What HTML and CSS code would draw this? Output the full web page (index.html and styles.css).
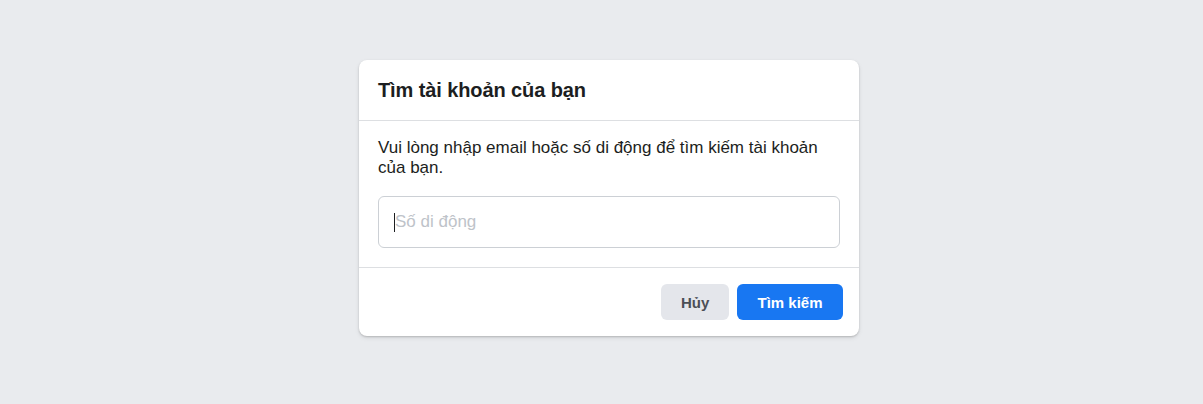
FILE: index.html
```html
<!DOCTYPE html>
<html lang="vi">
<head>
<meta charset="utf-8">
<title>Tìm tài khoản của bạn</title>
<link rel="stylesheet" href="styles.css">
</head>
<body>
<main class="page">
  <section class="card">
    <header class="card-header">
      <h2 class="card-title">Tìm tài khoản của bạn</h2>
    </header>
    <div class="card-body">
      <p class="card-text">Vui lòng nhập email hoặc số di động để tìm kiếm tài khoản của bạn.</p>
      <div class="field">
        <span class="caret"></span>
        <input class="input" type="text" placeholder="Số di động">
      </div>
    </div>
    <footer class="card-footer">
      <button class="btn btn-cancel" type="button">Hủy</button>
      <button class="btn btn-primary" type="button">Tìm kiếm</button>
    </footer>
  </section>
</main>
</body>
</html>
```
FILE: styles.css
```css
* { box-sizing: border-box; }
html, body {
  margin: 0;
  padding: 0;
  background: #e9ebee;
  font-family: "Liberation Sans", Arial, Helvetica, sans-serif;
}
.page {
  display: flex;
  justify-content: center;
  padding-top: 60px;
  padding-left: 15px;
  height: 404px;
}
.card {
  width: 500px;
  height: 276px;
  background: #fff;
  border-radius: 8px;
  box-shadow: 0 1px 2px rgba(0,0,0,0.18), 0 2px 5px rgba(0,0,0,0.08);
  display: flex;
  flex-direction: column;
}
.card-header {
  height: 61px;
  padding: 0 19px;
  display: flex;
  align-items: center;
  border-bottom: 1px solid #dddfe2;
}
.card-title {
  margin: 0;
  font-size: 20px;
  font-weight: bold;
  color: #1c1e21;
  line-height: 24px;
  letter-spacing: -0.1px;
}
.card-body {
  padding: 17px 19px 19px;
  border-bottom: 1px solid #dddfe2;
}
.card-text {
  margin: 0 0 18px;
  font-size: 17px;
  line-height: 20px;
  color: #1c1e21;
}
.field {
  position: relative;
}
.input {
  display: block;
  width: 100%;
  height: 52px;
  border: 1px solid #ccd0d5;
  border-radius: 6px;
  padding: 0 16px;
  font-family: inherit;
  font-size: 17px;
  color: #1d2129;
  outline: none;
  background: #fff;
}
.input::placeholder {
  color: #bec3c9;
}
.caret {
  position: absolute;
  left: 16px;
  top: 17px;
  width: 1px;
  height: 19px;
  background: #1c1e21;
}
.card-footer {
  flex: 1;
  display: flex;
  justify-content: flex-end;
  align-items: flex-start;
  gap: 8px;
  padding: 16px 16px 0;
}
.btn {
  height: 36px;
  border: none;
  border-radius: 6px;
  font-family: inherit;
  font-size: 15px;
  font-weight: bold;
  padding: 0 20px;
  cursor: pointer;
}
.btn-cancel {
  width: 68px;
  background: #e4e6eb;
  color: #4b4f56;
}
.btn-primary {
  width: 106px;
  background: #1877f2;
  color: #fff;
}
```
